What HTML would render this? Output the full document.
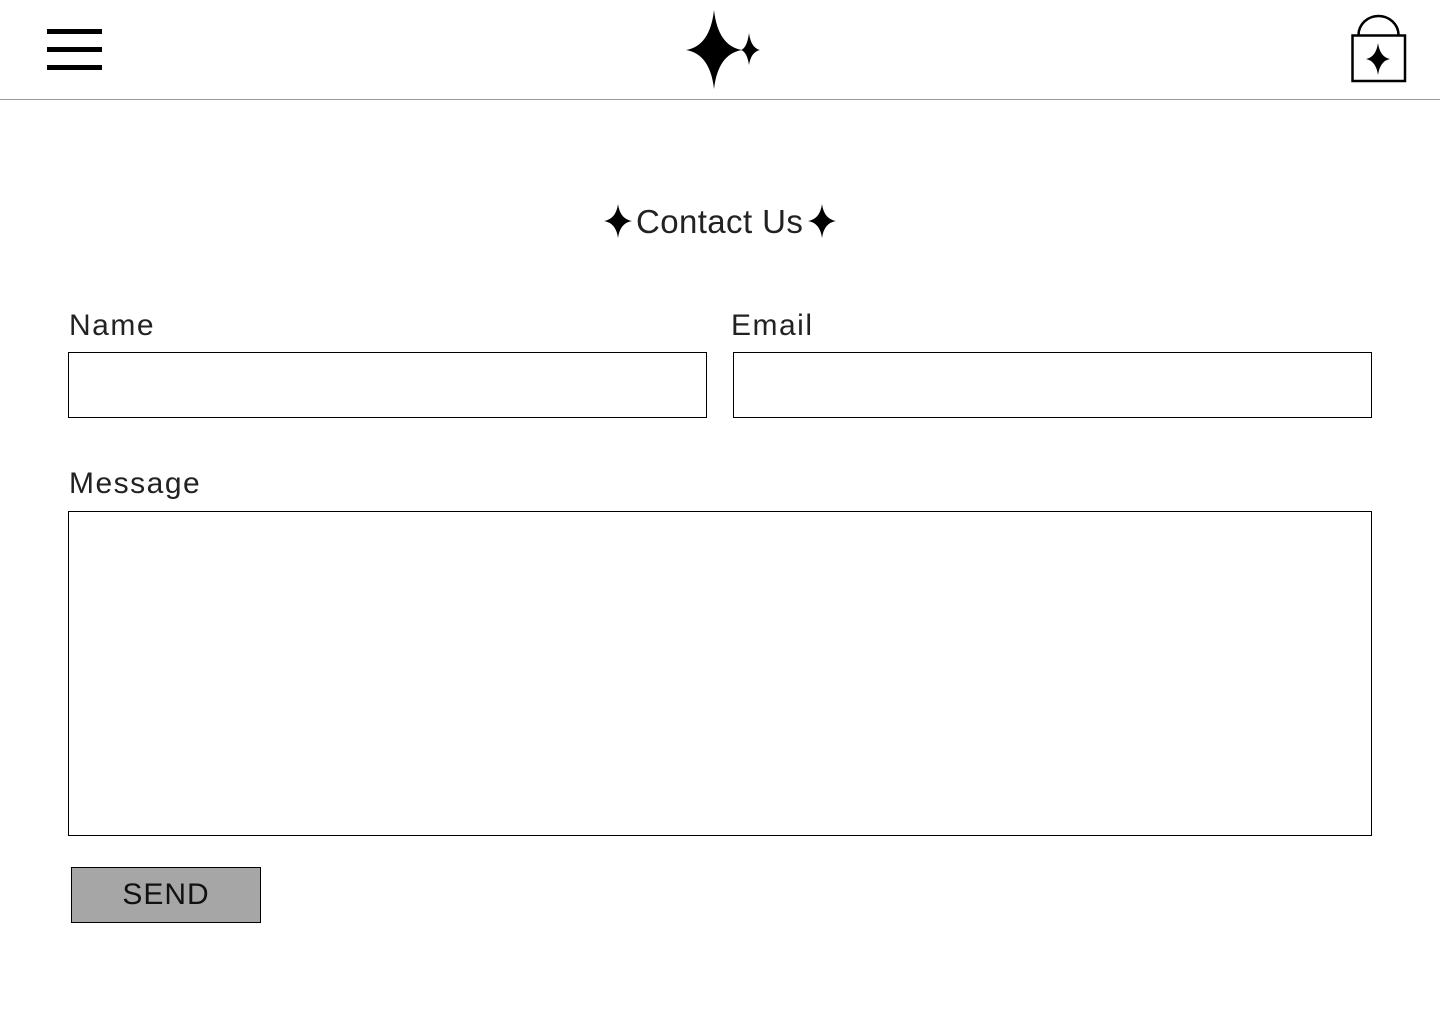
<!DOCTYPE html>
<html><head><meta charset="utf-8"><style>
html,body{margin:0;padding:0;background:#fff;width:1440px;height:1024px;overflow:hidden;position:relative;font-family:"Liberation Sans",sans-serif;}
.a{position:absolute;}
.lbl{position:absolute;font-size:30px;line-height:30px;color:#222;letter-spacing:1.5px;white-space:nowrap;}
.box{position:absolute;border:1.5px solid #000;box-sizing:border-box;background:#fff;}
.bar{position:absolute;left:47px;width:55px;height:5px;background:#000;}
</style></head><body>
<div class="bar" style="top:29px"></div>
<div class="bar" style="top:47px"></div>
<div class="bar" style="top:65px"></div>
<svg class="a" style="left:0;top:0" width="1440" height="100">
<path d="M714 10 Q718 46 742 50 Q718 54 714 89 Q710 54 686 50 Q710 46 714 10Z" fill="#000"/>
<path d="M749 33 Q751 48 760 50 Q751 52 749 65 Q747 52 741 50 Q747 48 749 33Z" fill="#000"/>
<rect x="1352.5" y="35.5" width="52.5" height="45.5" fill="none" stroke="#000" stroke-width="2.5"/>
<path d="M1358.5 35 A20 19 0 0 1 1398.5 35" fill="none" stroke="#000" stroke-width="2.5"/>
<path d="M1378 43 Q1380 57 1390 59 Q1380 61 1378 75 Q1376 61 1366 59 Q1376 57 1378 43Z" fill="#000"/>
<line x1="0" y1="99.5" x2="1440" y2="99.5" stroke="#999" stroke-width="1"/>
</svg>
<svg class="a" style="left:0;top:190px" width="1440" height="60">
<path d="M618 14 Q620 29 632 31 Q620 33 618 48 Q616 33 604 31 Q616 29 618 14Z" fill="#000"/>
<path d="M822 14 Q824 29 836 31 Q824 33 822 48 Q820 33 808 31 Q820 29 822 14Z" fill="#000"/>
</svg>
<div class="lbl" style="left:636px;top:205px;font-size:33px;line-height:33px;letter-spacing:0.4px">Contact Us</div>
<div class="lbl" style="left:69px;top:311px">Name</div>
<div class="lbl" style="left:731px;top:311px">Email</div>
<div class="box" style="left:68px;top:352px;width:639px;height:66px"></div>
<div class="box" style="left:733px;top:352px;width:639px;height:66px"></div>
<div class="lbl" style="left:69px;top:469px">Message</div>
<div class="box" style="left:68px;top:511px;width:1304px;height:325px"></div>
<div class="a" style="left:71px;top:867px;width:190px;height:56px;background:#a6a6a6;border:1.5px solid #000;box-sizing:border-box;text-align:center;font-size:30px;line-height:53px;color:#111;letter-spacing:1px">SEND</div>
</body></html>
